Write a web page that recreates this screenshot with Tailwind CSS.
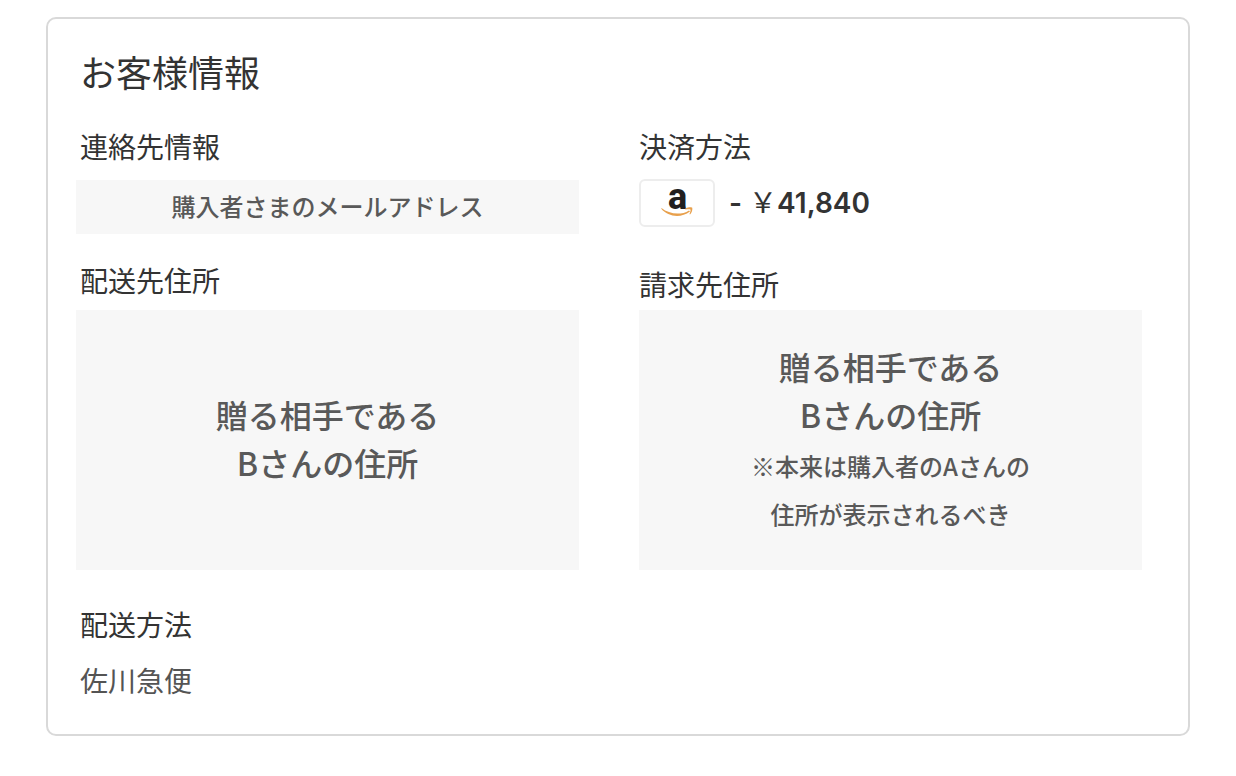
<!DOCTYPE html>
<html lang="ja">
<head>
  <meta charset="UTF-8" />
  <title>お客様情報</title>
  <meta name="viewport" content="width=device-width, initial-scale=1.0" />
  <script src="https://cdn.jsdelivr.net/npm/@tailwindcss/browser@4"></script>
</head>
<body class="bg-white font-['Noto_Sans_CJK_JP',sans-serif] text-[#333333]">

  <main class="px-[46px] pt-[17px] pb-10">
    <section class="border-2 border-[#d9d9d9] rounded-[10px] pt-7 pr-[46px] pb-9 pl-7">
      <h1 class="pl-1 text-4xl leading-12">お客様情報</h1>

      <div class="mt-[33px] grid grid-cols-2 gap-x-[60px]">

        <!-- contact / shipping -->
        <div>
          <h2 class="pl-1 text-[28px] leading-9">連絡先情報</h2>
          <p class="mt-4 pt-[2px] pb-1 bg-[#f7f7f7] text-center text-2xl leading-12 font-medium text-[#595959]">購入者さまのメールアドレス</p>

          <h2 class="mt-7 pl-1 text-[28px] leading-9">配送先住所</h2>
          <div class="mt-3 min-h-[260px] pb-1 bg-[#f7f7f7] flex items-center justify-center text-center text-[#595959]">
            <p class="text-[32px] leading-12 font-medium">贈る相手である<br />Bさんの住所</p>
          </div>

          <h2 class="mt-9 pl-1 text-[28px] leading-9">配送方法</h2>
          <p class="mt-5 pl-1 text-[28px] leading-9 text-[#545454]">佐川急便</p>
        </div>

        <!-- payment / billing -->
        <div>
          <h2 class="text-[28px] leading-9">決済方法</h2>
          <div class="mt-[15px] flex items-center gap-[14px]">
            <span class="w-[76px] h-12 border-2 border-[#ededed] rounded-md flex items-center justify-center">
              <svg class="w-9 h-11 overflow-visible" viewBox="0 -4 36 44" role="img" aria-label="Amazon">
                <text x="18.500" y="23.500" text-anchor="middle" font-family="Roboto, sans-serif" font-weight="800" font-size="36" fill="#221f1f">a</text>
                <path d="M2.500 23 C10 29.200 22 30.500 30 25.400 L31 26.500 C22 33.500 9 32 2.300 23.800 Z" fill="#e8a04c" />
                <path d="M26.300 23.600 C29 22.200 32.800 22 33.300 22.900 C33.700 25 32.500 27.900 31 29.400 L30.500 29.100 C31.300 27 31.900 25.200 31.400 24.600 C30.700 23.900 28.500 24.200 26.300 24.500 Z" fill="#e8a04c" />
              </svg>
            </span>
            <span class="font-['Inter','Noto_Sans_CJK_JP',sans-serif] text-[28px] leading-9 font-semibold">- <span class="font-normal">￥</span>41,840</span>
          </div>

          <h2 class="mt-[39px] text-[28px] leading-9">請求先住所</h2>
          <div class="mt-2 min-h-[260px] bg-[#f7f7f7] flex flex-col items-center justify-center gap-1 text-center font-medium text-[#595959]">
            <p class="text-[32px] leading-12">贈る相手である<br />Bさんの住所</p>
            <p class="text-2xl leading-12">※本来は購入者のAさんの<br />住所が表示されるべき</p>
          </div>
        </div>

      </div>
    </section>
  </main>

</body>
</html>
